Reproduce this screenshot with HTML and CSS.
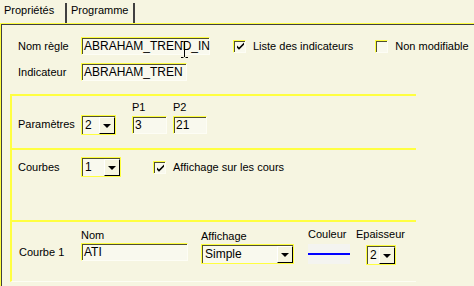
FILE: index.html
```html
<!DOCTYPE html>
<html lang="fr">
<head>
<meta charset="utf-8">
<title>Propriétés</title>
<link rel="stylesheet" href="styles.css">
</head>
<body>
<div class="tabs">
  <div class="tab active">Propriétés</div>
  <div class="tab">Programme</div>
</div>
<div class="panel">
  <div class="top">
    <div class="row r1">
      <span class="lbl">Nom règle</span>
      <div class="field w129 caret-host">ABRAHAM_TREND_IN
        <svg class="ibeam" width="7" height="17" viewBox="0 0 7 17"><path d="M0 0.5h2.5M4.5 0.5h2.5M3.5 1v15M0 16.5h2.5M4.5 16.5h2.5" stroke="#000" stroke-width="1" fill="none"/></svg>
      </div>
      <label class="chk chk1"><span class="box on"><svg width="9" height="9" viewBox="0 0 9 9"><path d="M1 3.5l2 2 5-5v2.2l-5 5-2-2z" fill="#000"/></svg></span>Liste des indicateurs</label>
      <label class="chk chk2"><span class="box"></span>Non modifiable</label>
    </div>
    <div class="row r2">
      <span class="lbl">Indicateur</span>
      <div class="field w106">ABRAHAM_TREN</div>
    </div>
  </div>
  <div class="group">
    <div class="sec s1">
      <span class="lbl lbl-mid">Paramètres</span>
      <div class="select w35"><span class="val">2</span><span class="btn"><i></i></span></div>
      <div class="col p1"><span class="cap">P1</span><div class="field w35">3</div></div>
      <div class="col p2"><span class="cap">P2</span><div class="field w34">21</div></div>
    </div>
    <div class="sec s2">
      <span class="lbl">Courbes</span>
      <div class="select w40"><span class="val">1</span><span class="btn"><i></i></span></div>
      <label class="chk chk3"><span class="box on"><svg width="9" height="9" viewBox="0 0 9 9"><path d="M1 3.5l2 2 5-5v2.2l-5 5-2-2z" fill="#000"/></svg></span>Affichage sur les cours</label>
    </div>
    <div class="sec s3">
      <span class="lbl lbl-c1">Courbe 1</span>
      <div class="col c-nom"><span class="cap">Nom</span><div class="field w107">ATI</div></div>
      <div class="col c-aff"><span class="cap">Affichage</span><div class="select w93"><span class="val">Simple</span><span class="btn"><i></i></span></div></div>
      <div class="col c-col"><span class="cap">Couleur</span><div class="swatch"><span></span></div></div>
      <div class="col c-ep"><span class="cap">Epaisseur</span><div class="select w30"><span class="val">2</span><span class="btn"><i></i></span></div></div>
    </div>
  </div>
</div>
</body>
</html>
```
FILE: styles.css
```css
* { box-sizing: border-box; }
html, body { margin: 0; padding: 0; }
body {
  width: 474px;
  height: 286px;
  overflow: hidden;
  background: #f6f5e1;
  font-family: "Liberation Sans", Arial, sans-serif;
  font-size: 11px;
  color: #000;
  line-height: 13px;
}
.tabs { display: flex; height: 23px; align-items: stretch; }
.tab { padding: 4px 4px 0 4px; }
.tab.active { padding-left: 4px; width: 65px; }
.tab:not(.active) {
  margin-top: 3px;
  padding: 1px 4px 0 4px;
  width: 70px;
  border-left: 2px solid #404040;
  border-right: 2px solid #404040;
}
.panel {
  height: 263px;
  border-top: 1px solid #ffff40;
  border-left: 1px solid #ffff40;
  box-shadow: inset 1px 1px 0 #404040;
  padding: 13px 0 0 9px;
}
.top { padding-left: 8px; display: flex; flex-direction: column; gap: 8px; }
.row { display: flex; align-items: center; }
.lbl { width: 63px; flex: none; }
.field {
  height: 18px;
  background: #f9f9ee;
  border-top: 1px solid #ffff40;
  border-left: 1px solid #ffff40;
  border-right: 1px solid #fdfdf5;
  border-bottom: 1px solid #fdfdf5;
  box-shadow: inset 1px 1px 0 #505030;
  padding: 1px 0 0 2px;
  flex: none;
  white-space: nowrap;
  overflow: hidden;
  font-size: 12px;
  line-height: 15px;
}
.w129 { width: 129px; }
.w106 { width: 106px; }
.w107 { width: 107px; }
.w35 { width: 35px; }
.w34 { width: 34px; }
.w40 { width: 40px; }
.w93 { width: 93px; }
.w30 { width: 30px; }
.caret-host { position: relative; overflow: visible; }
.ibeam { position: absolute; left: 99px; top: 3px; }
.chk { display: flex; align-items: center; gap: 7px; }
.chk1 { margin-left: 23px; }
.chk2 { margin-left: 22px; }
.box {
  width: 13px; height: 13px;
  background: #f9f9ee;
  border-top: 1px solid #ffff40;
  border-left: 1px solid #ffff40;
  border-right: 1px solid #fdfdf5;
  border-bottom: 1px solid #fdfdf5;
  box-shadow: inset 1px 1px 0 #505030;
  display: flex; align-items: center; justify-content: center;
  padding: 1px 0 0 1px;
}
.box svg { display: block; }
.group {
  width: 406px;
  height: 188px;
  margin-top: 13px;
  border-left: 2px solid #ffff40;
  border-bottom: 1px solid #fdfdf3;
  display: flex; flex-direction: column;
}
.sec {
  border-top: 2px solid #ffff40;
  padding-left: 6px;
  display: flex;
}
.s1 { height: 54px; padding-top: 7px; align-items: flex-end; padding-bottom: 14px; }
.s1 .lbl-mid { align-self: flex-end; line-height: 18px; height: 19px; }
.s1 .select { margin-bottom: -1px; }
.col { display: flex; flex-direction: column; gap: 2px; }
.cap { height: 13px; }
.p1 { margin-left: 16px; }
.p2 { margin-left: 6px; }
.s2 { height: 72px; padding-top: 7px; align-items: flex-start; }
.s2 .lbl { line-height: 20px; }
.chk3 { margin-left: 32px; margin-top: 4px; }
.s3 { flex: 1; padding-top: 7px; align-items: flex-start; }
.s3 .lbl-c1 { width: 63px; line-height: 18px; padding-left: 1px; margin-top: 14px; }
.c-nom { gap: 1px; }
.c-aff { margin-left: 13px; gap: 1px; margin-top: 1px; }
.c-col { margin-left: 14px; gap: 3px; margin-top: -1px; }
.c-ep { margin-left: 6px; gap: 4px; margin-top: -1px; }
.c-ep .select { margin-left: 10px; }
.select {
  height: 20px;
  display: flex; align-items: stretch;
  background: #f9f9ee;
  border: 1px solid #ffff40;
  box-shadow: inset 1px 1px 0 #505030;
  padding: 1px 0 0 1px;
  flex: none;
}
.select .val { flex: 1; padding: 1px 0 0 2px; font-size: 12px; line-height: 15px; }
.select .btn {
  width: 16px;
  background: #f6f5e1;
  border-top: 1px solid #ffffff;
  border-left: 1px solid #ffffff;
  border-right: 1px solid #000;
  border-bottom: 1px solid #000;
  display: flex; align-items: center; justify-content: center;
}
.select .btn i {
  display: block; width: 0; height: 0;
  border-left: 4px solid transparent;
  border-right: 4px solid transparent;
  border-top: 4px solid #000;
  margin-top: 1px;
}
.swatch {
  width: 42px; height: 20px;
  background: #f4f4f0;
  display: flex; align-items: center;
}
.swatch span { display: block; width: 100%; height: 2px; background: #0000ff; }
```
